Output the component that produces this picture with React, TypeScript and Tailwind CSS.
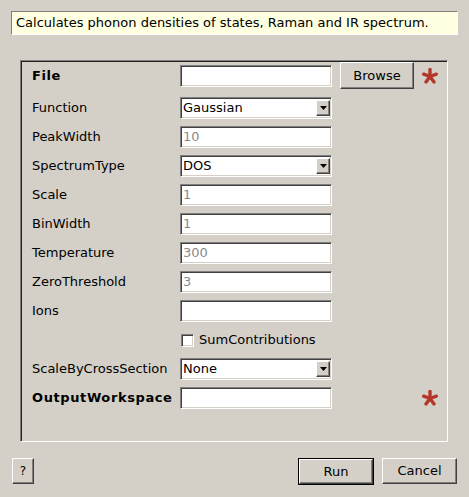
const sunken =
  "bg-white border border-t-[#808080] border-l-[#808080] border-b-white border-r-white shadow-[inset_1px_1px_0_#404040,inset_-1px_-1px_0_#d4d0c8]";
const raised =
  "bg-[#d4d0c8] border border-t-white border-l-white border-b-[#404040] border-r-[#404040] shadow-[inset_-1px_-1px_0_#808080]";

const Star = () => (
  <svg width="16" height="16" viewBox="0 0 16 16" className="block">
    <g stroke="#b3372b" strokeWidth="3.4" strokeLinecap="round">
      <line x1="8" y1="8.5" x2="8" y2="1.5" />
      <line x1="8" y1="8.5" x2="14.3" y2="6.2" />
      <line x1="8" y1="8.5" x2="12" y2="14" />
      <line x1="8" y1="8.5" x2="4" y2="14" />
      <line x1="8" y1="8.5" x2="1.7" y2="6.2" />
    </g>
  </svg>
);

const TextBox: React.FC<{ value?: string }> = ({ value }) => (
  <div className={`${sunken} w-[152px] h-[22px] flex items-center pl-[2px] text-[#8a8a8a]`}>
    {value}
  </div>
);

const Combo: React.FC<{ value: string }> = ({ value }) => (
  <div className={`${sunken} w-[152px] h-[22px] flex items-center pl-[2px]`}>
    <span className="flex-1">{value}</span>
    <div className={`${raised} w-[14px] h-[16px] mr-[1px] flex items-center justify-center`}>
      <svg width="7" height="4" viewBox="0 0 7 4" className="block">
        <polygon points="0,0 7,0 3.5,4" fill="#000" />
      </svg>
    </div>
  </div>
);

const Row: React.FC<{ label: string; bold?: boolean; children: React.ReactNode; star?: boolean }> = ({
  label,
  bold,
  children,
  star,
}) => (
  <div className="flex items-center h-[22px]">
    <div className={`w-[148px] ${bold ? "font-bold tracking-[0.6px]" : ""}`}>{label}</div>
    {children}
    {star && (
      <div className="ml-[90px]">
        <Star />
      </div>
    )}
  </div>
);

export default function App() {
  return (
    <div className="w-[469px] h-[497px] bg-[#d4d0c8] font-['DejaVu_Sans',sans-serif] text-[13px] text-black flex flex-col px-[11px] pt-[11px]">
      {/* description */}
      <div className="h-[24px] w-[447px] bg-[#ffffe1] border border-t-[#808080] border-l-[#808080] border-b-white border-r-white flex items-center pl-[4px]">
        Calculates phonon densities of states, Raman and IR spectrum.
      </div>

      {/* properties */}
      <div className="mt-[25px] ml-[9px] w-[428px] h-[382px] border border-t-[#808080] border-l-[#808080] border-b-white border-r-white shadow-[inset_1px_1px_0_#202020] pl-[11px] pt-[1px] flex flex-col">
        <div className="flex items-center h-[27px]">
          <div className="w-[148px] font-bold tracking-[0.6px]">File</div>
          <TextBox />
          <button className={`${raised} ml-[8px] w-[74px] h-[27px]`}>Browse</button>
          <div className="ml-[8px]">
            <Star />
          </div>
        </div>
        <div className="flex flex-col gap-[7px] mt-[8px]">
          <Row label="Function">
            <Combo value="Gaussian" />
          </Row>
          <Row label="PeakWidth">
            <TextBox value="10" />
          </Row>
          <Row label="SpectrumType">
            <Combo value="DOS" />
          </Row>
          <Row label="Scale">
            <TextBox value="1" />
          </Row>
          <Row label="BinWidth">
            <TextBox value="1" />
          </Row>
          <Row label="Temperature">
            <TextBox value="300" />
          </Row>
          <Row label="ZeroThreshold">
            <TextBox value="3" />
          </Row>
          <Row label="Ions">
            <TextBox />
          </Row>
          <div className="flex items-center h-[22px] pl-[149px]">
            <div className={`${sunken} w-[13px] h-[13px]`} />
            <span className="ml-[5px]">SumContributions</span>
          </div>
          <Row label="ScaleByCrossSection">
            <Combo value="None" />
          </Row>
          <Row label="OutputWorkspace" bold star>
            <TextBox />
          </Row>
        </div>
      </div>

      {/* buttons */}
      <div className="mt-[16px] flex items-start justify-between pl-[1px] pr-[1px]">
        <button className={`${raised} w-[22px] h-[26px] text-[12px]`}>?</button>
        <div className="flex items-start gap-[8px]">
          <div className="border border-black">
            <button className={`${raised} w-[74px] h-[25px] block`}>Run</button>
          </div>
          <button className={`${raised} w-[75px] h-[26px]`}>Cancel</button>
        </div>
      </div>
    </div>
  );
}
